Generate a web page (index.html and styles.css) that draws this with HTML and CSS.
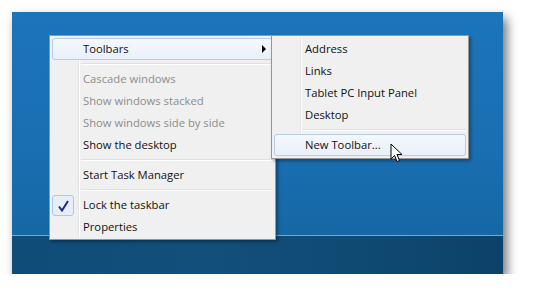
FILE: index.html
```html
<!DOCTYPE html>
<html lang="en">
<head>
  <meta charset="UTF-8" />
  <meta name="viewport" content="width=device-width, initial-scale=1.0" />
  <title>Taskbar menu</title>
  <link rel="stylesheet" href="styles.css">
</head>
<body>
  <div class="screen">
    <div class="desktop"></div>
    <div class="taskbar"></div>

    <ul class="menu main-menu">
      <li class="item hot">Toolbars <span class="arrow"></span></li>
      <li class="sep"></li>
      <li class="item off">Cascade windows</li>
      <li class="item off">Show windows stacked</li>
      <li class="item off">Show windows side by side</li>
      <li class="item">Show the desktop</li>
      <li class="sep"></li>
      <li class="item">Start Task Manager</li>
      <li class="sep"></li>
      <li class="item">
        <span class="check">
          <svg width="11" height="12" viewBox="0 0 11 12"><path d="M1 6.5 L4 10.5 L10 1" fill="none" stroke="#1c2a8c" stroke-width="2"/></svg>
        </span>
        Lock the taskbar
      </li>
      <li class="item">Properties</li>
    </ul>

    <ul class="menu sub-menu">
      <li class="item">Address</li>
      <li class="item">Links</li>
      <li class="item">Tablet PC Input Panel</li>
      <li class="item">Desktop</li>
      <li class="sep"></li>
      <li class="item hot">New Toolbar...</li>
    </ul>

    <svg class="cursor" width="14" height="21" viewBox="0 0 14 21">
      <path d="M1 1 L1 16 L4.5 12.5 L7 18.5 L9.5 17.5 L7 11.5 L12 11.5 Z" fill="#fff" stroke="#000" stroke-width="1" stroke-linejoin="round"/>
    </svg>
  </div>
</body>
</html>
```

FILE: styles.css
```css
body {
  margin: 0;
  background: #fff;
  font-family: "Open Sans", "Noto Sans", sans-serif;
  font-size: 11.25px;
}

.screen {
  position: relative;
  margin: 12px 0 0 12px;
  width: 491px;
  height: 262px;
  display: flex;
  flex-direction: column;
  box-shadow: 4px 6px 10px rgba(0, 0, 0, 0.55);
}

.desktop {
  flex: 1;
  background: linear-gradient(180deg, #1c74ba 0%, #1a6fb2 60%, #1667a4 100%);
}

.taskbar {
  height: 38px;
  border-top: 1px solid #7ba7cb;
  background: linear-gradient(90deg, #0f4c78 0%, #124f79 40%, #0f4a73 70%, #0c4269 100%);
}

.menu {
  position: absolute;
  margin: 0;
  padding: 2px;
  list-style: none;
  background: #f0f0f0;
  border: 1px solid #979797;
  box-shadow: 2px 2px 3px rgba(0, 0, 0, 0.35);
  box-sizing: border-box;
}

/* gutter line left of the text column */
.menu::before {
  content: "";
  position: absolute;
  top: 2px;
  bottom: 2px;
  left: 28px;
  width: 1px;
  background: #e2e3e3;
  border-right: 1px solid #fff;
}

.main-menu {
  left: 37px;
  top: 23px;
  width: 227px;
  height: 205px;
}

.sub-menu {
  left: 259px;
  top: 23px;
  width: 198px;
  height: 124px;
  z-index: 2;
}

.item {
  position: relative;
  height: 22px;
  line-height: 19px;
  padding-left: 30px;
  color: #111;
  white-space: nowrap;
  box-sizing: border-box;
  border: 1px solid transparent;
  border-radius: 3px;
}

.item.off {
  color: #8d8d8d;
}

.item.hot {
  border-color: #b5cde9;
  background: linear-gradient(180deg, #f5f8fc 0%, #e9f0f9 100%);
  z-index: 1;
}

.sep {
  position: relative;
  height: 8px;
}

.sep::after {
  content: "";
  position: absolute;
  left: 29px;
  right: 0;
  top: 3px;
  height: 1px;
  background: #e0e0e0;
  border-bottom: 1px solid #fff;
}

.arrow {
  position: absolute;
  left: 209px;
  top: 6px;
  width: 0;
  height: 0;
  border-left: 4px solid #000;
  border-top: 4px solid transparent;
  border-bottom: 4px solid transparent;
}

.check {
  position: absolute;
  left: -1px;
  top: 0;
  width: 20px;
  height: 19px;
  border: 1px solid #aac8ee;
  border-radius: 3px;
  background: #e6eefa;
  display: flex;
  align-items: center;
  justify-content: center;
}

.cursor {
  position: absolute;
  left: 378px;
  top: 131px;
  z-index: 3;
}
```
